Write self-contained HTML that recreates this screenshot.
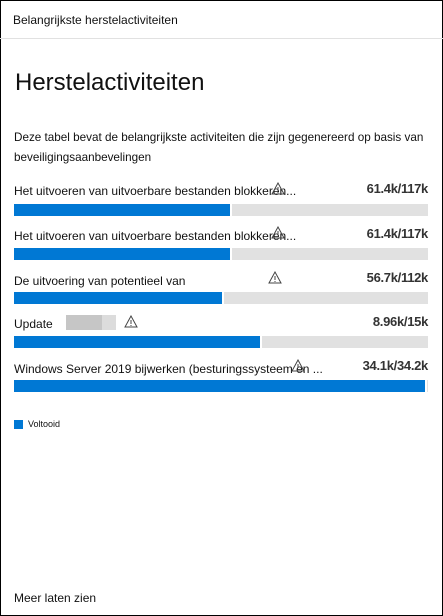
<!DOCTYPE html>
<html><head><meta charset="utf-8"><style>
*{margin:0;padding:0;box-sizing:border-box}
body{width:443px;height:616px;background:#fff;font-family:"Liberation Sans",sans-serif;color:#111;position:relative;overflow:hidden}
.frame{position:absolute;left:0;top:0;width:443px;height:616px;border:1px solid #000}
.hdr{position:absolute;left:0;top:38px;width:443px;height:1px;background:#e1e1e1}
.t{position:absolute;white-space:nowrap}
.bar{position:absolute;left:14px;width:414px;height:12px;background:#e1e1e1}
.bar i{position:absolute;left:0;top:0;height:12px;background:#0078d4;border-right:2px solid #fff}
.w{position:absolute;width:14px;height:13px}
.n{right:15px;font-size:13px;color:#333;font-weight:bold;letter-spacing:-0.3px}
</style></head><body>
<div class="frame"></div>
<div class="t" style="left:13px;top:13px;font-size:12px">Belangrijkste herstelactiviteiten</div>
<div class="hdr"></div>
<div class="t" style="left:15px;top:69px;font-size:24px">Herstelactiviteiten</div>
<div class="t" style="left:14px;top:128px;font-size:11.7px;line-height:20px">Deze tabel bevat de belangrijkste activiteiten die zijn gegenereerd op basis van<br>beveiligingsaanbevelingen</div>

<div class="t" style="left:14px;top:184px;font-size:12px">Het uitvoeren van uitvoerbare bestanden blokkeren...</div>
<div class="t n" style="top:181px">61.4k/117k</div>
<div class="bar" style="top:204px"><i style="width:218px"></i></div>

<div class="t" style="left:14px;top:229px;font-size:12px">Het uitvoeren van uitvoerbare bestanden blokkeren...</div>
<div class="t n" style="top:226px">61.4k/117k</div>
<div class="bar" style="top:248px"><i style="width:218px"></i></div>

<div class="t" style="left:14px;top:274px;font-size:12px">De uitvoering van potentieel van</div>
<div class="t n" style="top:270px">56.7k/112k</div>
<div class="bar" style="top:292px"><i style="width:210px"></i></div>

<div class="t" style="left:14px;top:317px;font-size:12px">Update</div>
<div style="position:absolute;left:66px;top:315px;width:36px;height:15px;background:#c6c6c6"></div>
<div style="position:absolute;left:102px;top:315px;width:14px;height:15px;background:#dcdcdc"></div>
<div class="t n" style="top:314px">8.96k/15k</div>
<div class="bar" style="top:336px"><i style="width:248px"></i></div>

<div class="t" style="left:14px;top:362px;font-size:12px">Windows Server 2019 bijwerken (besturingssysteem en ...</div>
<div class="t n" style="top:358px">34.1k/34.2k</div>
<div class="bar" style="top:380px"><i style="width:413px"></i></div>

<svg class="w" style="left:271px;top:182px" viewBox="0 0 14 13"><path d="M7 1L13 12H1Z M7 5V9 M7 10V11" fill="none" stroke="#444" stroke-width="1"/></svg>
<svg class="w" style="left:271px;top:226px" viewBox="0 0 14 13"><path d="M7 1L13 12H1Z M7 5V9 M7 10V11" fill="none" stroke="#444" stroke-width="1"/></svg>
<svg class="w" style="left:268px;top:271px" viewBox="0 0 14 13"><path d="M7 1L13 12H1Z M7 5V9 M7 10V11" fill="none" stroke="#444" stroke-width="1"/></svg>
<svg class="w" style="left:124px;top:315px" viewBox="0 0 14 13"><path d="M7 1L13 12H1Z M7 5V9 M7 10V11" fill="none" stroke="#444" stroke-width="1"/></svg>
<svg class="w" style="left:291px;top:359px" viewBox="0 0 14 13"><path d="M7 1L13 12H1Z M7 5V9 M7 10V11" fill="none" stroke="#444" stroke-width="1"/></svg>

<div style="position:absolute;left:14px;top:420px;width:9px;height:9px;background:#0078d4"></div>
<div class="t" style="left:28px;top:419px;font-size:9px">Voltooid</div>
<div class="t" style="left:14px;top:591px;font-size:12px">Meer laten zien</div>
</body></html>
